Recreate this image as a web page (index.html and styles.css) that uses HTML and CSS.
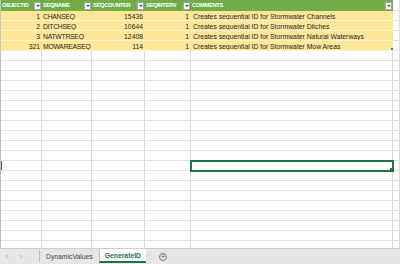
FILE: index.html
```html
<!DOCTYPE html>
<html lang="en">
<head>
<meta charset="UTF-8">
<title>GenerateID</title>
<link rel="stylesheet" href="styles.css">
</head>
<body>

<div class="sheet" id="sheet">
    <div class="row head">
        <div class="cell">OBJECTID<span class="filter"></span></div>
        <div class="cell">SEQNAME<span class="filter"></span></div>
        <div class="cell">SEQCOUNTER<span class="filter"></span></div>
        <div class="cell">SEQINTERV<span class="filter"></span></div>
        <div class="cell">COMMENTS<span class="filter"></span></div>
        <div class="cell blank"></div>
    </div>
    <div class="row data">
        <div class="cell num">1</div>
        <div class="cell name">CHANSEQ</div>
        <div class="cell num">15436</div>
        <div class="cell num">1</div>
        <div class="cell">Creates sequential ID for Stormwater Channels</div>
        <div class="cell blank"></div>
    </div>
    <div class="row data">
        <div class="cell num">2</div>
        <div class="cell name">DITCHSEQ</div>
        <div class="cell num">10644</div>
        <div class="cell num">1</div>
        <div class="cell">Creates sequential ID for Stormwater Ditches</div>
        <div class="cell blank"></div>
    </div>
    <div class="row data">
        <div class="cell num">3</div>
        <div class="cell name">NATWTRSEQ</div>
        <div class="cell num">12408</div>
        <div class="cell num">1</div>
        <div class="cell">Creates sequential ID for Stormwater Natural Waterways</div>
        <div class="cell blank"></div>
    </div>
    <div class="row data last">
        <div class="cell num">321</div>
        <div class="cell name">MOWAREASEQ</div>
        <div class="cell num">114</div>
        <div class="cell num">1</div>
        <div class="cell corner">Creates sequential ID for Stormwater Mow Areas</div>
        <div class="cell blank"></div>
    </div>
</div>

<div class="tabs">
    <div class="nav"><span class="arrow">&#8249;</span><span class="arrow">&#8250;</span></div>
    <div class="tab">DynamicValues</div>
    <div class="tab active">GenerateID</div>
    <div class="add"><span class="plus">+</span></div>
</div>

<script>
    // lege rijen onder de tabel, een cel is geselecteerd
    const sheet = document.getElementById('sheet');
    for (let r = 0; r < 20; r++) {
        const row = document.createElement('div');
        row.className = 'row empty' + (r === 11 ? ' active' : '');
        for (let c = 0; c < 6; c++) {
            const cell = document.createElement('div');
            cell.className = 'cell' + (r === 11 && c === 4 ? ' sel' : '');
            row.appendChild(cell);
        }
        sheet.appendChild(row);
    }
</script>

</body>
</html>
```

FILE: styles.css
```css
body {
    margin: 0;
    width: 400px;
    height: 264px;
    overflow: hidden;
    background: #fff;
    font-family: "Liberation Sans", Arial, sans-serif;
}

.sheet {
    height: 248px;
    overflow: hidden;
    border-left: 1px solid #c3c3c3;
}

.row {
    display: grid;
    grid-template-columns: 41px 50px 53px 46px 202px 1fr;
    height: 10px;
}

.cell {
    box-sizing: border-box;
    font-size: 6.8px;
    line-height: 9px;
    padding: 0 2px;
    white-space: nowrap;
    overflow: hidden;
}

.num {
    text-align: right;
}

.name {
    letter-spacing: -0.25px;
}

/* kop van de tabel */
.head {
    height: 11px;
}

.head .cell {
    background: #70ad47;
    color: #fff;
    font-weight: bold;
    font-size: 5.8px;
    letter-spacing: -0.35px;
    display: flex;
    align-items: center;
    justify-content: space-between;
    gap: 1px;
    padding: 0 1px 0 1px;
}

.filter {
    flex: none;
    width: 7px;
    height: 8px;
    box-sizing: border-box;
    background: #fff;
    border: 1px solid #a6a6a6;
    display: flex;
    align-items: center;
    justify-content: center;
}

.filter::after {
    content: "";
    border-left: 2px solid transparent;
    border-right: 2px solid transparent;
    border-top: 2px solid #444;
}

/* gele rijen */
.data .cell {
    background: #ffe699;
    color: #262626;
    border-bottom: 1px solid #fff3d0;
    padding-top: 1px;
}

.data .name {
    padding-left: 1px;
    padding-right: 0;
}

.head .cell.blank,
.data .cell.blank {
    background: #fff;
    border-bottom: 1px solid #e1e1e1;
    border-right: 1px solid #e1e1e1;
}

.corner {
    position: relative;
}

.corner::after {
    content: "";
    position: absolute;
    right: 0;
    bottom: 0;
    width: 2px;
    height: 2px;
    background: #4472c4;
}

/* lege rijen */
.empty .cell {
    border-right: 1px solid #dadada;
    border-bottom: 1px solid #e2e2e2;
}

.active .cell:first-child {
    box-shadow: inset 1px 0 0 #217346;
}

.sel {
    position: relative;
    outline: 2px solid #217346;
    outline-offset: -1px;
}

.sel::after {
    content: "";
    position: absolute;
    right: -3px;
    bottom: -3px;
    width: 4px;
    height: 4px;
    background: #217346;
    border: 1px solid #fff;
}

/* bladtabs onderaan */
.tabs {
    height: 16px;
    box-sizing: border-box;
    background: #e6e6e6;
    border-top: 1px solid #cdcdcd;
    display: flex;
    font-size: 6.8px;
    color: #444;
}

.nav {
    width: 39px;
    display: flex;
    align-items: center;
}

.arrow {
    width: 14px;
    text-align: center;
    color: #aaa;
    font-size: 8px;
}

.tab {
    display: flex;
    align-items: center;
    padding: 0 6px;
    border-left: 1px solid #bdbdbd;
    margin: 1px 0 2px;
}

.tab.active {
    background: #fff;
    color: #217346;
    font-weight: bold;
    padding: 0 5px;
    margin: 0 0 1px;
    border-bottom: 2px solid #217346;
}

.add {
    display: flex;
    align-items: center;
    margin-left: 13px;
}

.plus {
    width: 8px;
    height: 8px;
    box-sizing: border-box;
    border: 1px solid #777;
    border-radius: 50%;
    color: #555;
    font-size: 8px;
    line-height: 6px;
    text-align: center;
}
```
